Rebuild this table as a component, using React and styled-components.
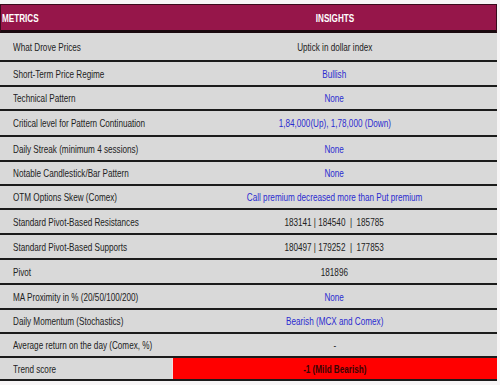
import React from "react";
import styled, { createGlobalStyle } from "styled-components";

const Global = createGlobalStyle`
  html, body { margin: 0; padding: 0; background: #f7f5f6; }
  body { font-family: "Liberation Sans", Arial, sans-serif; }
`;

const Table = styled.div`
  width: 497px;
  margin-top: 4px;
  display: flex;
  flex-direction: column;
`;

const Row = styled.div`
  display: grid;
  grid-template-columns: 172px 1fr;
  height: ${(p) => p.$h}px;
  box-sizing: border-box;
  background: #d9d9d9;
  border-bottom: 2px solid #1b1b1b;
`;

const HeadRow = styled(Row)`
  background: #96164a;
  border: 1px solid #3a0a1c;
  border-bottom: 3px solid #1a0a0f;
`;

const Text = styled.span`
  display: inline-block;
  white-space: pre;
  transform: scaleX(0.74);
  transform-origin: ${(p) => (p.$left ? "left center" : "center center")};
`;

const HeadCell = styled.div`
  display: flex;
  align-items: center;
  justify-content: ${(p) => (p.$center ? "center" : "flex-start")};
  padding-left: ${(p) => (p.$center ? "0" : "1px")};
  color: #ffffff;
  font-weight: bold;
  font-size: 11px;
`;

const Label = styled.div`
  display: flex;
  align-items: center;
  padding-left: 13px;
  color: #222222;
  font-size: 11px;
  white-space: nowrap;
  overflow: visible;
`;

const Value = styled.div`
  display: flex;
  align-items: center;
  justify-content: center;
  color: ${(p) => (p.$red ? "#3a0505" : p.$blue ? "#2b2bd0" : "#222222")};
  font-size: 11px;
  background: ${(p) => (p.$red ? "#ff0000" : "transparent")};
  border-left: ${(p) => (p.$red ? "1px solid #f0dede" : "none")};
  font-weight: ${(p) => (p.$red ? "bold" : "normal")};
`;

const rows = [
  { l: "What Drove Prices", v: "Uptick in dollar index", h: 29 },
  { l: "Short-Term Price Regime", v: "Bullish", blue: true, h: 25 },
  { l: "Technical Pattern", v: "None", blue: true, h: 24 },
  { l: "Critical level for Pattern Continuation", v: "1,84,000(Up), 1,78,000 (Down)", blue: true, h: 26 },
  { l: "Daily Streak (minimum 4 sessions)", v: "None", blue: true, h: 25 },
  { l: "Notable Candlestick/Bar Pattern", v: "None", blue: true, h: 24 },
  { l: "OTM Options Skew (Comex)", v: "Call premium decreased more than Put premium", blue: true, h: 24 },
  { l: "Standard Pivot-Based Resistances", v: "183141 | 184540  |  185785", h: 25 },
  { l: "Standard Pivot-Based Supports", v: "180497 | 179252  |  177853", h: 25 },
  { l: "Pivot", v: "181896", h: 25 },
  { l: "MA Proximity in % (20/50/100/200)", v: "None", blue: true, h: 25 },
  { l: "Daily Momentum (Stochastics)", v: "Bearish (MCX and Comex)", blue: true, h: 24 },
  { l: "Average return on the day (Comex, %)", v: "-", h: 24 },
  { l: "Trend score", v: "-1 (Mild Bearish)", red: true, h: 23 },
];

export default function App() {
  return (
    <>
      <Global />
      <Table>
        <HeadRow $h={29}>
          <HeadCell><Text $left>METRICS</Text></HeadCell>
          <HeadCell $center><Text>INSIGHTS</Text></HeadCell>
        </HeadRow>
        {rows.map((r) => (
          <Row key={r.l} $h={r.h}>
            <Label><Text $left>{r.l}</Text></Label>
            <Value $blue={r.blue} $red={r.red}><Text>{r.v}</Text></Value>
          </Row>
        ))}
      </Table>
    </>
  );
}
